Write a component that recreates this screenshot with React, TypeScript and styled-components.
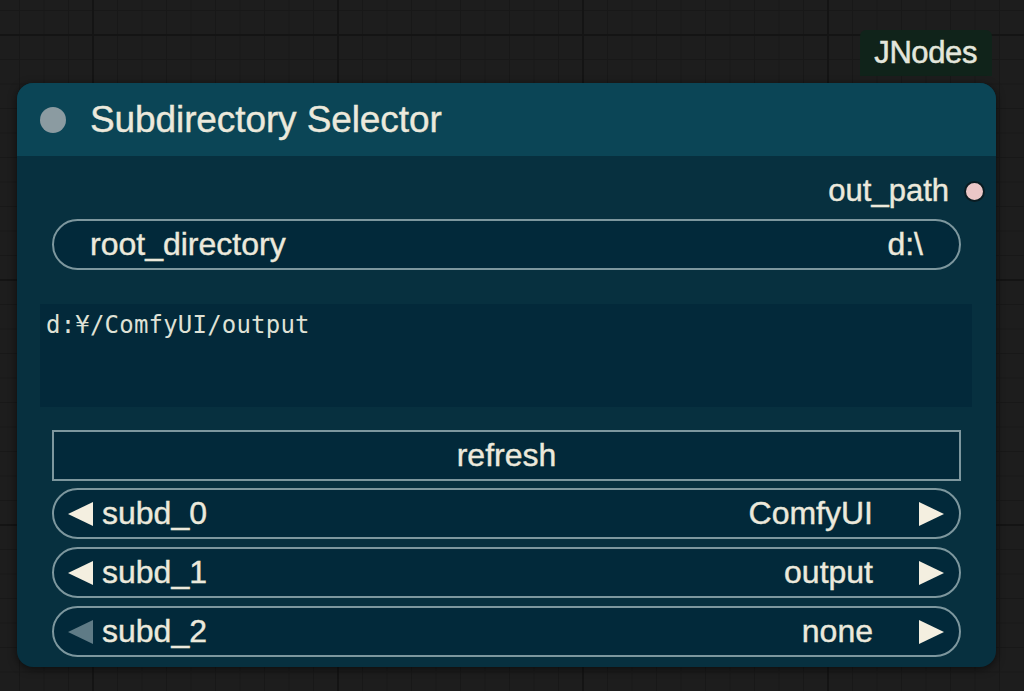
import styled, { createGlobalStyle } from 'styled-components';

const GlobalStyle = createGlobalStyle`
  html, body {
    margin: 0;
    padding: 0;
  }
  body {
    width: 1024px;
    height: 691px;
    overflow: hidden;
    background-color: #1d1d1d;
    background-image:
      linear-gradient(to right, #141414 2px, transparent 2px),
      linear-gradient(to bottom, #141414 2px, transparent 2px),
      linear-gradient(to right, #181818 1px, transparent 1px),
      linear-gradient(to bottom, #181818 1px, transparent 1px);
    background-size: 245px 245px, 245px 245px, 24.5px 24.5px, 24.5px 24.5px;
    background-position: 92px 34px, 92px 34px, 19px 10px, 19px 10px;
    font-family: 'Liberation Sans', Arial, sans-serif;
  }
`;

const Canvas = styled.div`
  display: flex;
  flex-direction: column;
  padding: 30px 0 0 17px;
  width: 979px;
`;

const BadgeRow = styled.div`
  display: flex;
  justify-content: flex-end;
  padding-right: 4px;
  margin-bottom: 7px;
`;

const Badge = styled.div`
  height: 46px;
  padding: 0 15px 0 14px;
  display: flex;
  align-items: center;
  background: #10231a;
  border-radius: 6px 6px 0 0;
  color: #e4e6dc;
  font-size: 31px;
  letter-spacing: -0.4px;
  -webkit-text-stroke: 0.5px #e4e6dc;
`;

const Node = styled.div`
  width: 979px;
  border-radius: 16px;
  background: #07303f;
  box-shadow: 0 2px 8px rgba(0, 0, 0, 0.55);
  overflow: hidden;
`;

const TitleBar = styled.div`
  height: 73px;
  display: flex;
  align-items: center;
  gap: 24px;
  padding-left: 23px;
  background: #0b4556;
`;

const TitleDot = styled.span`
  width: 26px;
  height: 26px;
  border-radius: 50%;
  background: #8b9ba1;
`;

const Title = styled.span`
  color: #ece9dc;
  font-size: 37px;
  letter-spacing: -0.1px;
  -webkit-text-stroke: 0.4px #ece9dc;
`;

const Body = styled.div`
  display: flex;
  flex-direction: column;
  padding-bottom: 10px;
`;

const OutputRow = styled.div`
  height: 40px;
  margin-top: 15px;
  display: flex;
  align-items: center;
  justify-content: flex-end;
  gap: 15px;
  padding-right: 11px;
  color: #ece9dc;
  font-size: 31px;
  -webkit-text-stroke: 0.4px #ece9dc;
`;

const OutputDot = styled.span`
  width: 17px;
  height: 17px;
  border-radius: 50%;
  background: #ebc7c7;
  border: 2px solid #0a1c22;
`;

const Widget = styled.div<{ $top?: number }>`
  height: 51px;
  box-sizing: border-box;
  margin: ${({ $top }) => $top ?? 8}px 35px 0;
  display: flex;
  align-items: center;
  border: 2px solid #7d979e;
  background: #02293a;
  color: #ece9dc;
  font-size: 32px;
  -webkit-text-stroke: 0.4px #ece9dc;
`;

const Pill = styled(Widget)`
  border-radius: 26px;
  padding: 0 36px 0 36px;
  justify-content: space-between;
`;

const Combo = styled(Widget)`
  border-radius: 26px;
  padding: 0 15px 0 14px;
`;

const Label = styled.span`
  flex: 1;
  margin-left: 8px;
`;

const Value = styled.span`
  margin-right: 45px;
`;

const Button = styled(Widget)`
  justify-content: center;
`;

const TextArea = styled.div`
  height: 103px;
  margin: 34px 24px 0 23px;
  box-sizing: border-box;
  padding: 7px 6px;
  background: #03293a;
  color: #dfe1d6;
  font-family: 'DejaVu Sans Mono', 'Liberation Mono', monospace;
  font-size: 24px;
  letter-spacing: 0.2px;
`;

const Arrow = ({ dir, dim }: { dir: 'left' | 'right'; dim?: boolean }) => (
  <svg width="26" height="24" viewBox="0 0 26 24">
    <polygon
      points={dir === 'left' ? '25,0 25,24 0,12' : '1,0 1,24 26,12'}
      fill={dim ? '#5f7b86' : '#f4efe0'}
    />
  </svg>
);

const combos = [
  { name: 'subd_0', value: 'ComfyUI', dim: false },
  { name: 'subd_1', value: 'output', dim: false },
  { name: 'subd_2', value: 'none', dim: true },
];

export default function App() {
  return (
    <>
      <GlobalStyle />
      <Canvas>
        <BadgeRow>
          <Badge>JNodes</Badge>
        </BadgeRow>
        <Node>
          <TitleBar>
            <TitleDot />
            <Title>Subdirectory Selector</Title>
          </TitleBar>
          <Body>
            <OutputRow>
              out_path
              <OutputDot />
            </OutputRow>
            <Pill>
              <span>root_directory</span>
              <span>d:\</span>
            </Pill>
            <TextArea>d:¥/ComfyUI/output</TextArea>
            <Button $top={23}>refresh</Button>
            {combos.map((c, i) => (
              <Combo key={c.name} $top={i === 0 ? 7 : 8}>
                <Arrow dir="left" dim={c.dim} />
                <Label>{c.name}</Label>
                <Value>{c.value}</Value>
                <Arrow dir="right" />
              </Combo>
            ))}
          </Body>
        </Node>
      </Canvas>
    </>
  );
}
